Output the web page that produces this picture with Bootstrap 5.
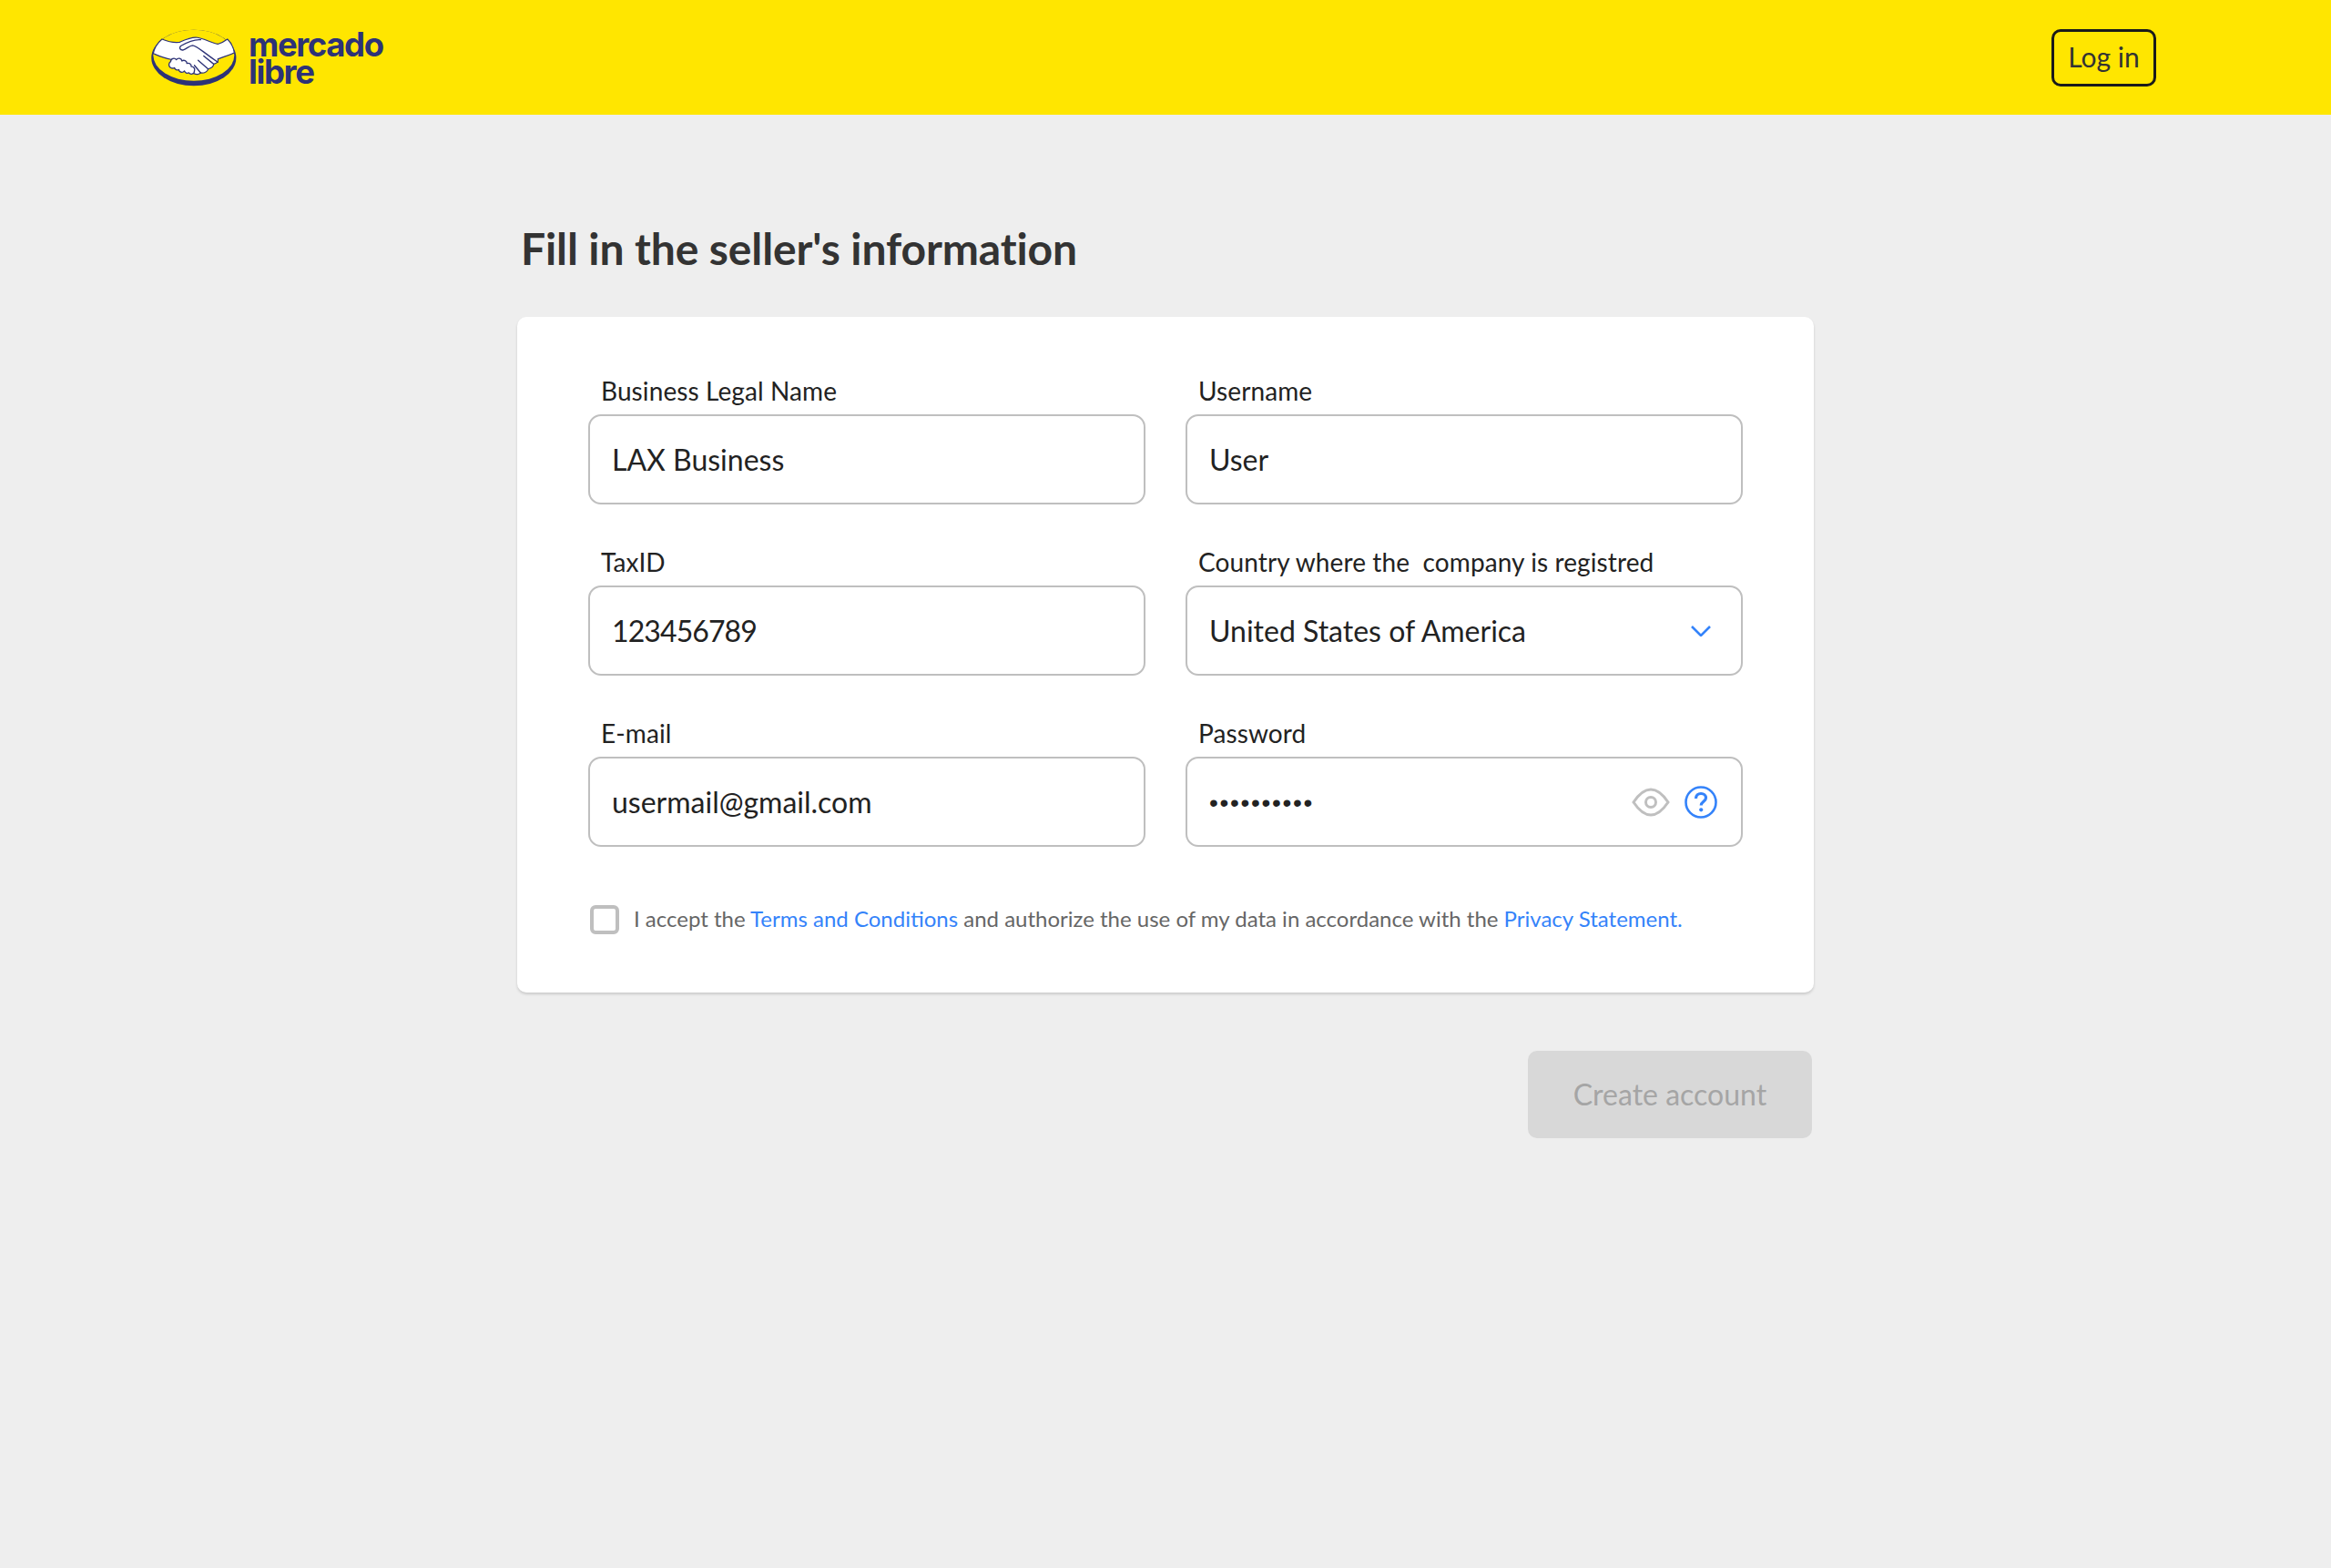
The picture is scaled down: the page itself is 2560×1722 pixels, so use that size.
<!DOCTYPE html>
<html lang="en"><head><meta charset="utf-8"><title>Fill in the seller's information</title>
<link href="https://cdn.jsdelivr.net/npm/bootstrap@5.3.0/dist/css/bootstrap.min.css" rel="stylesheet">
<style>
body{background:#eee;font-family:"Lato","Liberation Sans",sans-serif;color:#222;min-height:1722px}
.ml-top{background:#ffe600;height:126px;padding:0 192px 0 166px}
.ml-logo{gap:12px;color:#2d3277}
.ml-word{font-family:"Inter",sans-serif;font-weight:700;font-size:36.5px;line-height:30px;letter-spacing:-1.4px;padding-top:1px}
.ml-login{width:115px;height:63px;padding:0 0 2px;border:3px solid #1a1a1a;border-radius:10px;font-size:30px;color:#333;background:transparent}
.ml-wrap{width:1424px;margin:0 auto}
.ml-title{font-size:48px;font-weight:700;color:#333;line-height:60px;margin:117px 0 0 4px;padding-bottom:45px;letter-spacing:-.1px}
.ml-panel{background:#fff;border:0;border-radius:10px;padding:64px 78px;box-shadow:0 2px 3px rgba(0,0,0,.15)}
.ml-grid{--bs-gutter-x:44px;--bs-gutter-y:46px}
.ml-label{display:block;font-size:28px;line-height:34px;margin:0 0 9px 14px;color:#222;letter-spacing:.1px}
.ml-input.form-control,.ml-input.form-select{height:99px;border:2px solid #bfbfbf;border-radius:14px;font-size:32px;color:#222;padding:0 24px;box-shadow:none}
.ml-input.form-select{background-size:22px 12px;background-position:right 33px center;background-image:url("data:image/svg+xml,%3Csvg xmlns='http://www.w3.org/2000/svg' viewBox='0 0 22 12'%3E%3Cpath d='M1 1l10 10L21 1' fill='none' stroke='%233483fa' stroke-width='2.6'/%3E%3C/svg%3E")}
.ml-input.ml-digits{letter-spacing:-.9px}
.ml-input.ml-pass{letter-spacing:1.7px;font-family:"Liberation Sans",sans-serif;font-size:28px;padding-top:3px}
.ml-icons{right:28px;top:0;height:100%;gap:16px}
.ml-check{margin-top:63px;gap:16px;padding-left:2px}
.ml-check .form-check-input{width:32px;height:32px;margin:0;border:4px solid #bfbfbf;border-radius:6px;flex:none;box-shadow:none}
.ml-check label{font-size:24px;line-height:32px;color:#666;padding-bottom:1px}
.ml-check a{color:#3483fa;text-decoration:none}
.ml-actions{margin-top:64px;padding-right:2px}
.ml-create{width:312px;height:96px;border:0;border-radius:10px;background:#d8d8d8;color:#a5a5a5;font-size:32px;padding:0;opacity:1}
.ml-create:disabled{background:#d8d8d8;color:#a5a5a5;opacity:1}
</style></head>
<body>
<header class="ml-top d-flex align-items-center justify-content-between">
  <a class="ml-logo d-flex align-items-center text-decoration-none" href="#">
    <svg width="95" height="64" viewBox="22 15 276 187" aria-hidden="true">
      <ellipse cx="158" cy="110" rx="136" ry="90" fill="#2d3277"/>
      <ellipse cx="158" cy="102" rx="130" ry="82" fill="#ffe600"/>
      <path d="M28 96C32 75 42 62 56 50 75 58 92 62 112 60 130 52 150 42 170 45 190 48 215 62 235 66 248 62 258 56 266 50 278 62 286 78 288 94 270 102 250 108 235 114 238 122 232 128 222 130 222 138 212 144 204 146 202 154 192 160 180 158 176 164 165 164 158 160L85 115C60 110 45 103 28 96Z" fill="#fff" stroke="#2d3277" stroke-width="3.5" stroke-linejoin="round"/>
      <path d="M180 52C160 50 140 58 116 72 110 78 114 86 124 85 134 82 142 72 154 70 166 70 178 84 235 124M222 130 190 104M204 146 172 118M180 158 160 134" fill="none" stroke="#2d3277" stroke-width="4" stroke-linecap="round" stroke-linejoin="round"/>
      <path d="M84 122a10 10 0 0 1 18-6 10 10 0 0 1 18 4 10 10 0 0 1 16 8 10 10 0 0 1 14 10 10 10 0 0 1 10 14 10 10 0 0 1-18 6 10 10 0 0 1-14-6 10 10 0 0 1-18-4 10 10 0 0 1-14-6 10 10 0 0 1-12-20Z" fill="#fff" stroke="#2d3277" stroke-width="4" stroke-linejoin="round"/>
    </svg>
    <div class="ml-word">mercado<br>libre</div>
  </a>
  <button class="btn ml-login" type="button">Log in</button>
</header>
<main class="ml-wrap">
  <h1 class="ml-title">Fill in the seller's information</h1>
  <form class="card ml-panel">
    <div class="row ml-grid">
      <div class="col-6"><label class="ml-label" for="f1">Business Legal Name</label><input id="f1" class="form-control ml-input" value="LAX Business"></div>
      <div class="col-6"><label class="ml-label" for="f2">Username</label><input id="f2" class="form-control ml-input" value="User"></div>
      <div class="col-6"><label class="ml-label" for="f3">TaxID</label><input id="f3" class="form-control ml-input ml-digits" value="123456789"></div>
      <div class="col-6"><label class="ml-label" for="f4">Country where the&nbsp; company is registred</label><select id="f4" class="form-select ml-input"><option>United States of America</option></select></div>
      <div class="col-6"><label class="ml-label" for="f5">E-mail</label><input id="f5" class="form-control ml-input" value="usermail@gmail.com"></div>
      <div class="col-6"><label class="ml-label" for="f6">Password</label>
        <div class="position-relative"><input id="f6" type="password" class="form-control ml-input ml-pass" value="abcdefghij">
          <div class="ml-icons position-absolute d-flex align-items-center">
            <svg width="42" height="32" viewBox="0 0 42 32" aria-hidden="true"><path d="M2 16C8 7 14 2 21 2s13 5 19 14c-6 9-12 14-19 14S8 25 2 16Z" fill="none" stroke="#bfbfbf" stroke-width="3"/><circle cx="21" cy="16" r="5.5" fill="none" stroke="#bfbfbf" stroke-width="3"/></svg>
            <svg width="36" height="36" viewBox="0 0 36 36" aria-hidden="true"><circle cx="18" cy="18" r="16.5" fill="none" stroke="#3483fa" stroke-width="2.6"/><path d="M12.5 14c0-3.4 2.4-5.5 5.6-5.5 3.2 0 5.4 2 5.4 4.7 0 4-5.3 4-5.3 8.3" fill="none" stroke="#3483fa" stroke-width="3.2"/><circle cx="18.2" cy="26.3" r="2.1" fill="#3483fa"/></svg>
          </div>
        </div>
      </div>
    </div>
    <div class="ml-check d-flex align-items-center">
      <input id="f7" class="form-check-input" type="checkbox">
      <label for="f7">I accept the <a href="#">Terms and Conditions</a> and authorize the use of my data in accordance with the <a href="#">Privacy Statement.</a></label>
    </div>
  </form>
  <div class="ml-actions d-flex justify-content-end">
    <button class="btn ml-create" type="button" disabled>Create account</button>
  </div>
</main>
<script src="https://cdn.jsdelivr.net/npm/bootstrap@5.3.0/dist/js/bootstrap.bundle.min.js"></script>
</body></html>
